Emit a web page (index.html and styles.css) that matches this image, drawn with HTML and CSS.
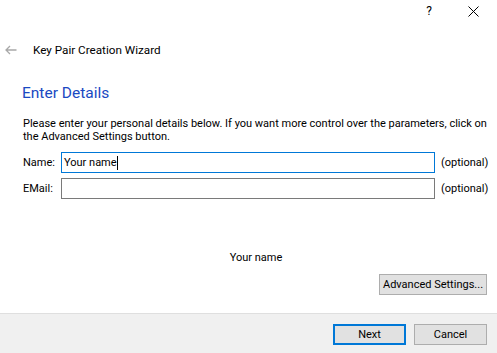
FILE: index.html
```html
<!DOCTYPE html>
<html lang="en">
<head>
    <meta charset="UTF-8">
    <meta name="viewport" content="width=device-width, initial-scale=1.0">
    <title>Key Pair Creation Wizard</title>
    <link rel="stylesheet" href="styles.css">
</head>
<body>
    <div class="window">
        <div class="titlebar">
            <span class="help-btn">?</span>
            <span class="close-btn">
                <svg width="11" height="11" viewBox="0 0 11 11">
                    <path d="M0.5 0.5 L10.5 10.5 M10.5 0.5 L0.5 10.5" stroke="#000" stroke-width="1" fill="none"/>
                </svg>
            </span>
        </div>

        <div class="header">
            <svg class="back-arrow" width="12" height="10" viewBox="0 0 12 10">
                <path d="M11.5 5 H1 M5 1 L1 5 L5 9" stroke="#a8a8a8" stroke-width="1.3" fill="none"/>
            </svg>
            <span class="wizard-title">Key Pair Creation Wizard</span>
        </div>

        <div class="content">
            <h1 class="page-title">Enter Details</h1>
            <p class="intro">Please enter your personal details below. If you want more control over the parameters, click on<br>the Advanced Settings button.</p>

            <div class="form">
                <label class="field-label">Name:</label>
                <div class="text-field focused">Your name<span class="caret"></span></div>
                <span class="optional">(optional)</span>

                <label class="field-label">EMail:</label>
                <div class="text-field"></div>
                <span class="optional">(optional)</span>
            </div>

            <div class="preview">Your name</div>

            <div class="advanced-row">
                <button class="btn">Advanced Settings...</button>
            </div>
        </div>

        <div class="footer">
            <button class="btn btn-default">Next</button>
            <button class="btn">Cancel</button>
        </div>
    </div>
</body>
</html>
```

FILE: styles.css
```css
* {
    margin: 0;
    padding: 0;
    box-sizing: border-box;
}

body {
    font-family: 'Roboto', 'Liberation Sans', sans-serif;
    font-size: 11px;
    color: #000;
    background: #fff;
}

.window {
    width: 497px;
    height: 353px;
    display: flex;
    flex-direction: column;
    overflow: hidden;
}

.titlebar {
    height: 22px;
    display: flex;
    justify-content: flex-end;
    align-items: center;
    padding-right: 18px;
    gap: 36px;
}

.help-btn {
    font-size: 12px;
    line-height: 1;
    margin-top: -1px;
}

.close-btn {
    display: flex;
}

.header {
    height: 54px;
    display: flex;
    align-items: center;
    padding: 2px 0 0 5px;
    gap: 16px;
}

.wizard-title {
    font-size: 11.7px;
}

.content {
    flex: 1;
    padding: 7px 10px 0 22px;
}

.page-title {
    font-size: 15.5px;
    font-weight: normal;
    color: #1a49c2;
    line-height: 20px;
    margin-bottom: 14px;
}

.intro {
    line-height: 13px;
    padding-left: 1px;
    margin-bottom: 9px;
}

.form {
    display: grid;
    grid-template-columns: 33px 374px auto;
    column-gap: 6px;
    row-gap: 5px;
    align-items: center;
}

.field-label {
    padding-left: 1px;
}

.text-field {
    height: 21px;
    border: 1px solid #7a7a7a;
    padding: 0 2px;
    display: flex;
    align-items: center;
}

.text-field.focused {
    border-color: #0078d7;
}

.caret {
    width: 1px;
    height: 14px;
    background: #000;
}

.preview {
    text-align: center;
    line-height: 13px;
    margin-top: 52px;
    padding-left: 3px;
}

.advanced-row {
    display: flex;
    justify-content: flex-end;
    margin-top: 10px;
}

.btn {
    font-family: inherit;
    font-size: 11px;
    height: 21px;
    background: #e1e1e1;
    border: 1px solid #adadad;
    color: #000;
    padding: 0;
    white-space: nowrap;
}

.advanced-row .btn {
    width: 108px;
}

.footer {
    height: 40px;
    background: #f0f0f0;
    border-top: 1px solid #dfdfdf;
    display: flex;
    justify-content: flex-end;
    align-items: flex-start;
    padding: 10px 10px 0 0;
    gap: 8px;
}

.footer .btn {
    width: 73px;
}

.btn-default {
    border: 2px solid #0078d7;
}
```
